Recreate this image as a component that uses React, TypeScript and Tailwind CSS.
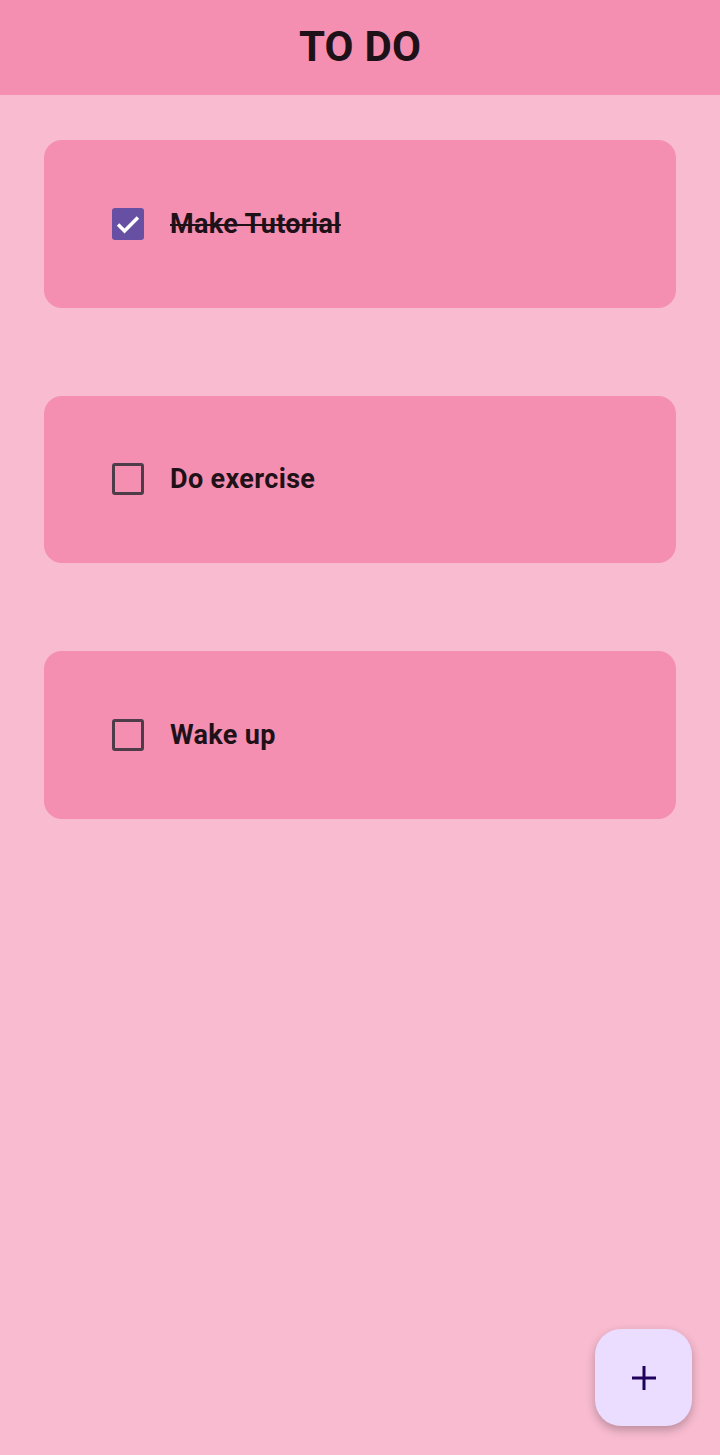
import { useState } from 'react';

interface Todo {
  id: number;
  title: string;
  done: boolean;
}

const initial: Todo[] = [
  { id: 1, title: 'Make Tutorial', done: true },
  { id: 2, title: 'Do exercise', done: false },
  { id: 3, title: 'Wake up', done: false },
];

export default function App() {
  const [todos, setTodos] = useState<Todo[]>(initial);

  const toggle = (id: number) =>
    setTodos((list) => list.map((t) => (t.id === id ? { ...t, done: !t.done } : t)));

  return (
    <div
      className="relative min-h-[1455px] w-full bg-[#f8bbd0] text-[#1f1118]"
      style={{ fontFamily: 'Roboto, "Noto Sans", sans-serif' }}
    >
      {/* App bar */}
      <header className="h-[95px] bg-[#f48fb1] flex items-center justify-center">
        <h1 className="text-[42px] font-bold leading-none tracking-[0.2px] -mt-[2px]">TO DO</h1>
      </header>

      {/* List */}
      <div className="flex flex-col gap-[88px] px-[44px] pt-[45px]">
        {todos.map((todo) => (
          <div
            key={todo.id}
            className="h-[167.5px] rounded-[18px] bg-[#f48fb1] flex items-center pl-[68px] gap-[26px] cursor-pointer"
            onClick={() => toggle(todo.id)}
          >
            {todo.done ? (
              <div className="w-[32px] h-[32px] rounded-[3px] bg-[#6750a4] flex items-center justify-center">
                <svg width="28" height="28" viewBox="0 0 24 24" fill="none">
                  <path d="M3.5 12.5l5.5 5.5L20.5 6.5" stroke="white" strokeWidth="3" />
                </svg>
              </div>
            ) : (
              <div className="w-[32px] h-[32px] rounded-[3px] border-[3px] border-[#4e3c48]" />
            )}
            <span
              className={
                'text-[27px] font-bold leading-none tracking-[0.35px] mt-[1px] ' +
                (todo.done ? 'line-through decoration-[2px]' : '')
              }
            >
              {todo.title}
            </span>
          </div>
        ))}
      </div>

      {/* FAB */}
      <button className="absolute right-[28px] bottom-[29px] w-[97px] h-[97px] rounded-[26px] bg-[#eaddff] shadow-[0_4px_10px_rgba(0,0,0,0.25)] flex items-center justify-center">
        <svg width="28" height="28" viewBox="0 0 28 28" fill="none">
          <path d="M14 2v24M2 14h24" stroke="#21005d" strokeWidth="3" />
        </svg>
      </button>
    </div>
  );
}
